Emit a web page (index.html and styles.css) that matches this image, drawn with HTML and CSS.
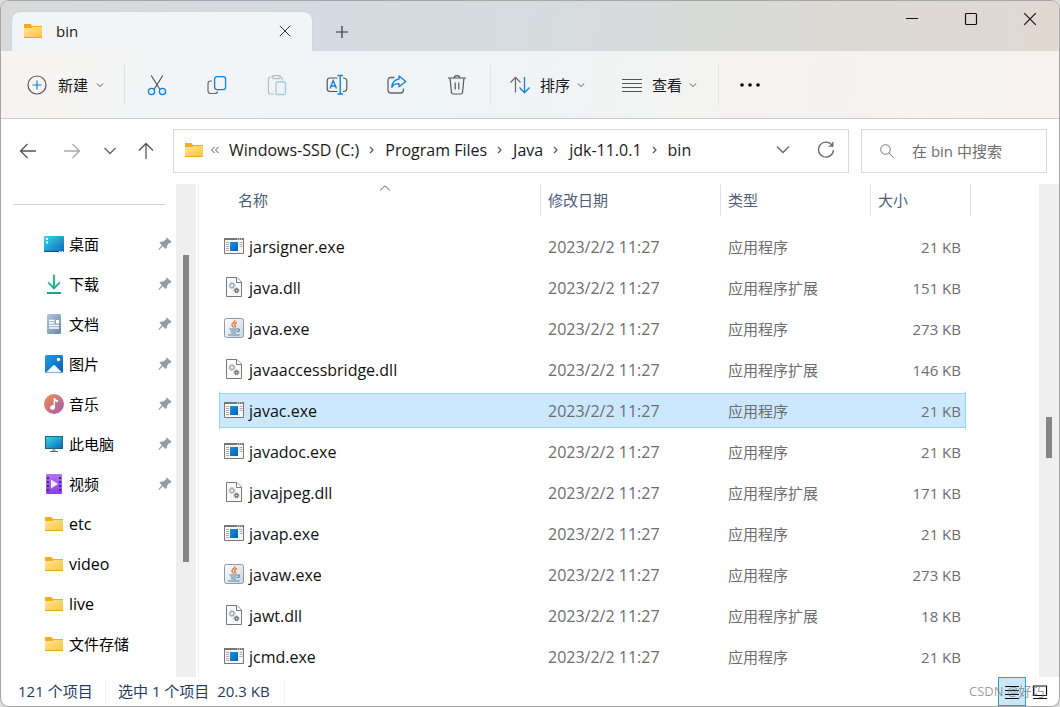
FILE: index.html
```html
<!DOCTYPE html>
<html lang="zh-CN">
<head>
<meta charset="utf-8">
<title>bin</title>
<link rel="stylesheet" href="styles.css">
</head>
<body>
<svg class="defs" aria-hidden="true">
  <defs>
    <linearGradient id="g-folder" x1="0" y1="0" x2="1" y2="1"><stop offset="0" stop-color="#ffe69a"/><stop offset="1" stop-color="#fcc436"/></linearGradient>
    <linearGradient id="g-desk" x1="0" y1="0" x2="1" y2="1"><stop offset="0" stop-color="#35d8e4"/><stop offset="1" stop-color="#0f68bd"/></linearGradient>
    <linearGradient id="g-down" x1="0" y1="0" x2="0" y2="1"><stop offset="0" stop-color="#2dc887"/><stop offset="1" stop-color="#12a595"/></linearGradient>
    <linearGradient id="g-doc" x1="0" y1="0" x2="1" y2="1"><stop offset="0" stop-color="#b4c6da"/><stop offset="1" stop-color="#6886a6"/></linearGradient>
    <linearGradient id="g-pic" x1="0" y1="0" x2="1" y2="1"><stop offset="0" stop-color="#1f9ce8"/><stop offset="1" stop-color="#075fb5"/></linearGradient>
    <linearGradient id="g-mus" x1="0" y1="0" x2="1" y2="1"><stop offset="0" stop-color="#f28e4b"/><stop offset="1" stop-color="#a35bb4"/></linearGradient>
    <linearGradient id="g-vid" x1="0" y1="0" x2="0" y2="1"><stop offset="0" stop-color="#b574f2"/><stop offset="1" stop-color="#8540dd"/></linearGradient>
    <linearGradient id="g-java" x1="0" y1="0" x2="1" y2="1"><stop offset="0" stop-color="#ffffff"/><stop offset="1" stop-color="#c9d3dc"/></linearGradient>
    <linearGradient id="g-exe" x1="0" y1="0" x2="1" y2="1"><stop offset="0" stop-color="#1492e6"/><stop offset="1" stop-color="#0860ae"/></linearGradient>
    <symbol id="folder" viewBox="0 0 20 20"><path d="M1 3.500q0-.5.5-.5h6l1.500 2h9.500q.5 0 .5.500V10H1z" fill="#f3ad1b"/><path d="M1 7h7.500L9.500 6H19v11H1z" fill="url(#g-folder)"/><path d="M1 16.500h18" stroke="#eaa621"/></symbol>
    <symbol id="pin" viewBox="0 0 14 14"><path d="M8.600.4 13.500 4.600 12.300 6.200 11.300 6 9.200 8.200 9 10.600 7.600 12 4.800 9.300 1.200 13 .5 12.900.600 12 4 8.300 1.500 5.700 2.900 4.600 5.400 4.600 7.900 2.400z" fill="#939ba3"/></symbol>
    <symbol id="exe" viewBox="0 0 20 20"><path d="M.5 2.500h19v15H.5z" fill="#f8f8f8" stroke="#777"/><path d="M0 2h20v2H0z" fill="#777"/><path d="M13 3h1m1 0h1m1 0h1" stroke="#fff"/><path d="M6 6h8v9H6z" fill="url(#g-exe)"/><path d="M2 6.500h3M2 8.500h3M2 10.500h3M2 12.500h3M2 14.500h3M15.500 6.500h3M15.500 8.500h3M15.500 10.500h3" stroke="#aaa"/></symbol>
    <symbol id="dll" viewBox="0 0 20 20"><path d="M2.500.5h10.500l4.500 4.500v14.500h-15z" fill="#fafafa" stroke="#777"/><path d="M12.500.5V5.500h5" fill="#fff" stroke="#777"/><circle cx="8" cy="8.500" r="2" fill="none" stroke="#a3acb5" stroke-width="1.300"/><circle cx="8" cy="8.500" r="3" fill="none" stroke="#a3acb5" stroke-dasharray="1.200 1.200"/><circle cx="12.500" cy="13.500" r="1.500" fill="none" stroke="#606b76" stroke-width="1.300"/><circle cx="12.500" cy="13.500" r="2.400" fill="none" stroke="#606b76" stroke-dasharray="1 1"/></symbol>
    <symbol id="java" viewBox="0 0 20 20"><rect x=".5" y=".5" width="19" height="19" rx="2" fill="url(#g-java)" stroke="#8b9aa8"/><path d="M11 2c1 2-4 3-3 5.200.3.800 1.400 1.200 1.200 2.300M13 4.500c-3 1-2.800 2-1.800 3 .6.700.2 1.500-.8 2" fill="none" stroke="#e8743b" stroke-width="1.400"/><path d="M5.500 11h8M6.500 13h6M7.200 15h4.800M4 17h11.500M13.500 11c3-.6 2.600 2.600-.5 2.700" fill="none" stroke="#5f86a2" stroke-width="1.200"/></symbol>
    <symbol id="chev" viewBox="0 0 8 8"><path d="M.8 2.500 4 5.500l3.200-3" fill="none" stroke="#666"/></symbol>
    <symbol id="crumb" viewBox="0 0 6 10"><path d="M1 2l3 3-3 3" fill="none" stroke="#555" stroke-width="1.200"/></symbol>
  </defs>
</svg>
<div class="window">
  <header class="titlebar">
    <div class="tab">
      <svg class="ic20"><use href="#folder"/></svg>
      <span class="tab-name">bin</span>
      <button class="tab-close" aria-label="关闭标签页"><svg width="12" height="12" viewBox="0 0 12 12"><path d="M.8.8l10.400 10.400M11.200.8.8 11.200" stroke="#333" fill="none"/></svg></button>
    </div>
    <button class="new-tab" aria-label="新标签页"><svg width="14" height="14" viewBox="0 0 14 14"><path d="M7 1v12M1 7h12" stroke="#333" stroke-width="1.200"/></svg></button>
    <div class="caption">
      <button aria-label="最小化"><svg width="14" height="14" viewBox="0 0 14 14"><path d="M1 6.500h12" stroke="#111"/></svg></button>
      <button aria-label="最大化"><svg width="14" height="14" viewBox="0 0 14 14"><rect x="1.500" y="1.500" width="11" height="11" rx="1" fill="none" stroke="#111" stroke-width="1.200"/></svg></button>
      <button aria-label="关闭"><svg width="14" height="14" viewBox="0 0 14 14"><path d="M1.200 1.200l11.600 11.600M12.800 1.200 1.200 12.800" stroke="#111" stroke-width="1.200"/></svg></button>
    </div>
  </header>

  <div class="toolbar">
    <button class="cmd cmd-new"><svg class="ic20" viewBox="0 0 20 20"><circle cx="10" cy="10" r="9" fill="none" stroke="#555" stroke-width="1.200"/><path d="M10 5.500v9M5.500 10h9" stroke="#1480d8" stroke-width="1.200"/></svg>新建<svg class="ic8"><use href="#chev"/></svg></button>
    <span class="sep"></span>
    <div class="tools">
      <button aria-label="剪切"><svg class="ic22" viewBox="0 0 22 22"><path d="M5.200 1.500 14 15.500M16.800 1.500 8 15.500" fill="none" stroke="#555" stroke-width="1.200"/><circle cx="5.500" cy="17.500" r="3.100" fill="none" stroke="#1480d8" stroke-width="1.300"/><circle cx="16.500" cy="17.500" r="3.100" fill="none" stroke="#1480d8" stroke-width="1.300"/></svg></button>
      <button aria-label="复制"><svg class="ic22" viewBox="0 0 22 22"><path d="M6 7H4.500Q2 7 2 9.500V17q0 2.500 2.500 2.500H9q2.500 0 2.500-2" fill="none" stroke="#666" stroke-width="1.200"/><rect x="8.600" y="2.600" width="11" height="13" rx="2.500" fill="none" stroke="#1480d8" stroke-width="1.300"/></svg></button>
      <button aria-label="粘贴" disabled><svg class="ic22" viewBox="0 0 22 22"><path d="M7 3H4.500Q2.500 3 2.500 5v13q0 2 2 2H8M14 3h.5q2 0 2 2v1.500M7 1.600h7v3H7z" fill="none" stroke="#bbb" stroke-width="1.200"/><rect x="10" y="8" width="9.500" height="12.500" rx="1.500" fill="none" stroke="#9ccbee" stroke-width="1.300"/></svg></button>
      <button aria-label="重命名"><svg class="ic22" viewBox="0 0 22 22"><path d="M11.500 4H4Q1.200 4 1.200 7v7.500Q1.200 17.500 4 17.500h7.500M17 4q3.800 0 3.800 3v7.500q0 3-3.800 3" fill="none" stroke="#555" stroke-width="1.200"/><path d="M11.500 1.500h5.500M11.500 20h5.500M14.200 1.500V20M4 14.500 7.200 6.500l3.300 8M5.100 12h4.300" fill="none" stroke="#1480d8" stroke-width="1.400"/></svg></button>
      <button aria-label="共享"><svg class="ic22" viewBox="0 0 22 22"><path d="M8.500 3.500H5Q2 3.500 2 6.500v9.500q0 3 3 3h9.500q3 0 3-3v-1.500" fill="none" stroke="#666" stroke-width="1.300"/><path d="M13 2l6.800 5.500L13 12.800V9.700Q8 9.500 5.800 13.300 6.500 5.800 13 5z" fill="none" stroke="#1480d8" stroke-width="1.300" stroke-linejoin="round"/></svg></button>
      <button aria-label="删除"><svg class="ic22" viewBox="0 0 22 22"><path d="M2 4h18M4 4l1.500 14.500q.2 1.500 1.700 1.500h7.600q1.500 0 1.700-1.500L18 4M8.200 4Q8.200 1.600 11 1.600T13.800 4M9.200 8.500v7M12.800 8.500v7" fill="none" stroke="#555" stroke-width="1.200"/></svg></button>
    </div>
    <span class="sep"></span>
    <button class="cmd cmd-sort"><svg class="ic20" viewBox="0 0 20 20"><path d="M5.500 17.500V2.500M.5 7.500l5-5.200 5 5.200" fill="none" stroke="#666" stroke-width="1.200"/><path d="M14.500 2v15.500M9.500 12.500l5 5.200 5-5.200" fill="none" stroke="#1480d8" stroke-width="1.300"/></svg>排序<svg class="ic8"><use href="#chev"/></svg></button>
    <button class="cmd cmd-view"><svg class="ic20" viewBox="0 0 20 20"><path d="M0 4.500h20M0 8.500h20M0 12.500h20M0 16.500h20" stroke="#555"/></svg>查看<svg class="ic8"><use href="#chev"/></svg></button>
    <span class="sep"></span>
    <button class="more" aria-label="查看更多"><svg class="ic20" viewBox="0 0 20 20"><circle cx="2" cy="10" r="1.800"/><circle cx="10" cy="10" r="1.800"/><circle cx="18" cy="10" r="1.800"/></svg></button>
  </div>

  <div class="navbar">
    <div class="nav-buttons">
      <button aria-label="后退"><svg width="18" height="18" viewBox="0 0 18 18"><path d="M17 9H1.500M8.500 2l-7 7 7 7" fill="none" stroke="#555" stroke-width="1.300"/></svg></button>
      <button aria-label="前进"><svg width="18" height="18" viewBox="0 0 18 18"><path d="M1 9h15.500M9.500 2l7 7-7 7" fill="none" stroke="#aaa" stroke-width="1.300"/></svg></button>
      <button class="recent" aria-label="最近位置"><svg width="12" height="12" viewBox="0 0 12 12"><path d="M.5 3 6 8.500 11.500 3" fill="none" stroke="#666" stroke-width="1.400"/></svg></button>
      <button class="up" aria-label="上移"><svg width="18" height="18" viewBox="0 0 18 18"><path d="M9 17V1.500M2 8.500l7-7 7 7" fill="none" stroke="#555" stroke-width="1.300"/></svg></button>
    </div>
    <div class="address">
      <svg class="ic20"><use href="#folder"/></svg>
      <svg class="overflow" width="10" height="8" viewBox="0 0 10 8"><path d="M4.500 1 1.500 4l3 3M8.500 1l-3 3 3 3" fill="none" stroke="#555"/></svg>
      <nav class="crumbs" aria-label="路径">
        <a href="#">Windows-SSD (C:)</a><svg class="ic-crumb"><use href="#crumb"/></svg>
        <a href="#">Program Files</a><svg class="ic-crumb"><use href="#crumb"/></svg>
        <a href="#">Java</a><svg class="ic-crumb"><use href="#crumb"/></svg>
        <a href="#">jdk-11.0.1</a><svg class="ic-crumb"><use href="#crumb"/></svg>
        <a href="#">bin</a>
      </nav>
      <button aria-label="历史记录"><svg width="14" height="14" viewBox="0 0 14 14"><path d="M1 3.500 7 9.500l6-6" fill="none" stroke="#666" stroke-width="1.400"/></svg></button>
      <button aria-label="刷新"><svg width="18" height="18" viewBox="0 0 18 18"><path d="M15.500 4.800A7.500 7.500 0 1 0 16.500 9M15.800 1v4.200h-4.200" fill="none" stroke="#666" stroke-width="1.300"/></svg></button>
    </div>
    <label class="search">
      <svg width="14" height="14" viewBox="0 0 14 14"><circle cx="5.500" cy="5.500" r="4.800" fill="none" stroke="#777"/><path d="M9 9l4.600 4.600" stroke="#777"/></svg>
      <input type="text" placeholder="在 bin 中搜索" aria-label="搜索">
    </label>
  </div>

  <main class="content">
    <aside class="sidebar">
      <hr>
      <ul class="places">
        <li><svg class="ic20" viewBox="0 0 20 20"><rect y="2" width="20" height="16" rx="1" fill="url(#g-desk)"/><path d="M0 17h20v0q0 1-1 1H1q-1 0-1-1z" fill="#0c4f80"/><path d="M2 4h2v2H2zM2 7.500h2v2H2z" fill="#fff"/><path d="M15 17.500h4" stroke="#dff" stroke-dasharray="1 .5"/></svg><a href="#">桌面</a><svg class="pin"><use href="#pin"/></svg></li>
        <li><svg class="ic20" viewBox="0 0 20 20"><path d="M9 .5h2v11.500l4.200-4.300 1.300 1.300L10 15.800 3.500 9l1.300-1.300L9 12zM3 18h14v2H3z" fill="url(#g-down)"/></svg><a href="#">下载</a><svg class="pin"><use href="#pin"/></svg></li>
        <li><svg class="ic20" viewBox="0 0 20 20"><rect x="3" width="14" height="20" rx="1.500" fill="url(#g-doc)"/><path d="M5 6.500h5.500M5 9h5.500M5 11.500h10M5 14h10" stroke="#fff" stroke-width="1.300"/><path d="M12 6h3v3.500h-3z" fill="#fff"/></svg><a href="#">文档</a><svg class="pin"><use href="#pin"/></svg></li>
        <li><svg class="ic20" viewBox="0 0 20 20"><rect x="1" y="1" width="18" height="18" rx="1.500" fill="url(#g-pic)"/><path d="M2 18.500 9 11.500q1-1 2 0l7 7z" fill="#f0f7ff"/><circle cx="14.500" cy="5.500" r="1.700" fill="#fff"/></svg><a href="#">图片</a><svg class="pin"><use href="#pin"/></svg></li>
        <li><svg class="ic20" viewBox="0 0 20 20"><circle cx="10" cy="10" r="10" fill="url(#g-mus)"/><path d="M9.600 4h1.400q.5 2 3 2.200V8q-2 0-3-.8V13.500a2.400 2.200 0 1 1-1.400-2z" fill="#fff"/></svg><a href="#">音乐</a><svg class="pin"><use href="#pin"/></svg></li>
        <li><svg class="ic20" viewBox="0 0 20 20"><rect x="1" y="2" width="18" height="13" fill="#1a6584"/><rect x="2" y="3" width="16" height="11" fill="url(#g-desk)"/><path d="M8.500 15h3v2h-3z" fill="#9aa4ad"/><path d="M6 17.500h8" stroke="#566"/></svg><a href="#">此电脑</a><svg class="pin"><use href="#pin"/></svg></li>
        <li><svg class="ic20" viewBox="0 0 20 20"><rect x="2" width="16" height="20" rx="1" fill="url(#g-vid)"/><path d="M4 3v15M16 3v15" stroke="#4c2394" stroke-width="2" stroke-dasharray="2 2"/><path d="M7 5.500 14 10 7 14.500z" fill="#f4eafe"/></svg><a href="#">视频</a><svg class="pin"><use href="#pin"/></svg></li>
        <li><svg class="ic20"><use href="#folder"/></svg><a class="latin" href="#">etc</a></li>
        <li><svg class="ic20"><use href="#folder"/></svg><a class="latin" href="#">video</a></li>
        <li><svg class="ic20"><use href="#folder"/></svg><a class="latin" href="#">live</a></li>
        <li><svg class="ic20"><use href="#folder"/></svg><a href="#">文件存储</a></li>
      </ul>
    </aside>
    <div class="track track-side"><div class="thumb"></div></div>
    <section class="files">
      <table>
        <colgroup><col class="c-name"><col class="c-date"><col class="c-type"><col class="c-size"><col class="c-end"></colgroup>
        <thead><tr><th class="th-name">名称<svg class="sort" viewBox="0 0 12 6"><path d="M1 5.500 6 .8l5 4.700" fill="none" stroke="#666"/></svg></th><th>修改日期</th><th>类型</th><th colspan="2" class="th-last">大小</th></tr></thead>
        <tbody>
          <tr><td><span class="file"><svg class="ic20"><use href="#exe"/></svg>jarsigner.exe</span></td><td class="latin">2023/2/2 11:27</td><td>应用程序</td><td>21 KB</td></tr>
          <tr><td><span class="file"><svg class="ic20"><use href="#dll"/></svg>java.dll</span></td><td class="latin">2023/2/2 11:27</td><td>应用程序扩展</td><td>151 KB</td></tr>
          <tr><td><span class="file"><svg class="ic20"><use href="#java"/></svg>java.exe</span></td><td class="latin">2023/2/2 11:27</td><td>应用程序</td><td>273 KB</td></tr>
          <tr><td><span class="file"><svg class="ic20"><use href="#dll"/></svg>javaaccessbridge.dll</span></td><td class="latin">2023/2/2 11:27</td><td>应用程序扩展</td><td>146 KB</td></tr>
          <tr class="selected"><td><span class="file"><svg class="ic20"><use href="#exe"/></svg>javac.exe</span></td><td class="latin">2023/2/2 11:27</td><td>应用程序</td><td>21 KB</td></tr>
          <tr><td><span class="file"><svg class="ic20"><use href="#exe"/></svg>javadoc.exe</span></td><td class="latin">2023/2/2 11:27</td><td>应用程序</td><td>21 KB</td></tr>
          <tr><td><span class="file"><svg class="ic20"><use href="#dll"/></svg>javajpeg.dll</span></td><td class="latin">2023/2/2 11:27</td><td>应用程序扩展</td><td>171 KB</td></tr>
          <tr><td><span class="file"><svg class="ic20"><use href="#exe"/></svg>javap.exe</span></td><td class="latin">2023/2/2 11:27</td><td>应用程序</td><td>21 KB</td></tr>
          <tr><td><span class="file"><svg class="ic20"><use href="#java"/></svg>javaw.exe</span></td><td class="latin">2023/2/2 11:27</td><td>应用程序</td><td>273 KB</td></tr>
          <tr><td><span class="file"><svg class="ic20"><use href="#dll"/></svg>jawt.dll</span></td><td class="latin">2023/2/2 11:27</td><td>应用程序扩展</td><td>18 KB</td></tr>
          <tr><td><span class="file"><svg class="ic20"><use href="#exe"/></svg>jcmd.exe</span></td><td class="latin">2023/2/2 11:27</td><td>应用程序</td><td>21 KB</td></tr>
        </tbody>
      </table>
    </section>
    <div class="track track-main"><div class="thumb"></div></div>
  </main>

  <footer class="status">
    <span class="count">121 个项目</span>
    <span class="chosen">选中 1 个项目&nbsp; 20.3 KB</span>
    <div class="views">
      <button class="view-on" aria-label="详细信息"><svg width="16" height="16" viewBox="0 0 16 16"><path d="M1 2.500h14M1 6.500h14M1 10.500h14M1 14.500h14" stroke="#111" stroke-width="1.200"/></svg></button>
      <button aria-label="大图标"><svg width="16" height="16" viewBox="0 0 16 16"><path d="M1.500 2h13v9.500h-13zM1 14.500h14" fill="none" stroke="#111" stroke-width="1.200"/></svg></button>
      <span class="mark">CSDN @好巧.</span>
    </div>
  </footer>
</div>
</body>
</html>
```
FILE: styles.css
```css
* { box-sizing: border-box; }
html, body { height: 100%; }
body {
  margin: 0;
  background: #dcdcdc;
  color: #1a1a1a;
  font: 15px/20px "Open Sans", "Noto Sans CJK SC", sans-serif;
}
.defs { position: absolute; width: 0; height: 0; }
svg { display: block; flex: none; }
button {
  display: flex;
  align-items: center;
  justify-content: center;
  margin: 0;
  padding: 0;
  border: 0;
  background: none;
  color: inherit;
  font: inherit;
}
a { color: inherit; text-decoration: none; white-space: nowrap; }
.latin, .crumbs, .file { font-size: 16px; }
.ic20 { width: 20px; height: 20px; }
.ic22 { width: 22px; height: 22px; }
.ic8 { width: 8px; height: 8px; }
.ic-crumb { width: 6px; height: 10px; }

.window {
  display: flex;
  flex-direction: column;
  height: 100%;
  overflow: hidden;
  border: 1px solid #a6a6a6;
  border-radius: 9px;
  background: #fff;
}

.titlebar {
  display: flex;
  align-items: flex-end;
  height: 50px;
  flex: none;
  padding-left: 11px;
  background: linear-gradient(100deg, #d9d9d9, #d4dae2 28%, #d5dce0 45%, #dbdad5 78%, #e2d8d2);
}
.tab {
  display: flex;
  align-items: center;
  width: 300px;
  height: 39px;
  padding: 0 21px 2px 11px;
  border-radius: 8px 8px 0 0;
  background: #f3f4f5;
  box-shadow: 0 0 1px #aab;
}
.tab-name { flex: 1; padding-left: 13px; font-weight: 500; }
.new-tab { width: 60px; height: 39px; }
.caption { display: flex; align-self: flex-start; margin-left: auto; }
.caption button { width: 59px; height: 36px; }

.toolbar {
  display: flex;
  align-items: center;
  height: 68px;
  flex: none;
  padding-left: 26px;
  border-bottom: 1px solid #cbcccb;
  background: linear-gradient(100deg, #f6f4f2, #f2f4f6 20%, #eff4f6 42%, #f3f3f2 66%, #f7f2ef);
}
.cmd { gap: 10px; }
.cmd-new { gap: 11px; margin-right: 20px; }
.cmd .ic8 { margin-left: -3px; }
.sep { width: 1px; height: 40px; background: #e0e2e3; }
.tools { display: flex; padding: 0 3px 0 2px; }
.tools button { width: 60px; height: 44px; }
.cmd-sort { margin: 0 37px 0 19px; }
.cmd-view { margin-right: 21px; }
.more { margin-left: 21px; }

.navbar {
  display: flex;
  height: 65px;
  flex: none;
  padding: 10px 12px 11px 5px;
}
.nav-buttons { display: flex; margin-right: 7px; }
.nav-buttons button { width: 44px; }
.nav-buttons .recent { width: 32px; }
.nav-buttons .up { width: 40px; }
.address {
  display: flex;
  align-items: center;
  flex: 1;
  margin-right: 12px;
  padding: 0 1px 2px 10px;
  border: 1px solid #d9d9d9;
}
.address button { width: 43px; height: 40px; }
.overflow { margin: 0 9px 0 6px; }
.crumbs { display: flex; align-items: center; flex: 1; gap: 10px; }
.search {
  display: flex;
  align-items: center;
  width: 186px;
  padding-left: 18px;
  border: 1px solid #d9d9d9;
}
.search input {
  flex: 1;
  min-width: 0;
  padding: 0 0 0 18px;
  border: 0;
  outline: 0;
  background: none;
  font: inherit;
}
.search input::placeholder { color: #6d6d6d; opacity: 1; }

.content { display: flex; flex: 1; min-height: 0; }
.sidebar { width: 175px; flex: none; overflow: hidden; }
.sidebar hr { height: 1px; margin: 20px 11px 19px 13px; border: 0; background: #d2d2d2; }
.places { margin: 0; padding: 0 4px 0 43px; list-style: none; color: #000; }
.places li { display: flex; align-items: center; gap: 5px; height: 40px; }
.pin { width: 14px; height: 14px; margin-left: auto; }
.track { width: 20px; flex: none; background: #efefef; }
.thumb { width: 6px; margin-left: 7px; background: #858585; }
.track-side .thumb { height: 307px; margin-top: 71px; }
.track-main .thumb { height: 41px; margin-top: 233px; }

.files {
  flex: 1;
  min-width: 0;
  margin-left: 2px;
  padding-left: 20px;
  border-left: 1px solid #f0f0f0;
  overflow: hidden;
}
table { width: 752px; table-layout: fixed; border-spacing: 0; }
.c-name { width: 321px; }
.c-date { width: 180px; }
.c-type { width: 150px; }
.c-size { width: 96px; }
.c-end { width: 5px; }
th {
  height: 42px;
  padding: 0 8px 10px;
  background: linear-gradient(#e2e2e2, #e2e2e2) left top / 1px 32px no-repeat;
  color: #4c607a;
  font-weight: 400;
  text-align: left;
}
.th-name { position: relative; padding-left: 19px; background: none; }
.sort { position: absolute; top: 1px; left: 160px; width: 12px; height: 6px; }
.th-last {
  background:
    linear-gradient(#e2e2e2, #e2e2e2) left top / 1px 32px no-repeat,
    linear-gradient(#e2e2e2, #e2e2e2) right top / 1px 32px no-repeat;
}
td {
  height: 41px;
  padding: 0 8px;
  border: 0 solid transparent;
  border-width: 3px 0;
  background-clip: padding-box;
  color: #6d6d6d;
}
td:first-child { padding-left: 5px; color: #111; }
td:nth-child(4) { padding-right: 5px; text-align: right; }
.file { display: flex; align-items: center; gap: 5px; }
.file svg { margin-bottom: 2px; }
.selected td {
  background-color: #cce8ff;
  background-image: linear-gradient(#99d1ff, #99d1ff), linear-gradient(#99d1ff, #99d1ff);
  background-position: top, bottom;
  background-repeat: no-repeat;
  background-size: 100% 1px;
}
.selected td:first-child { border-left: 1px solid #99d1ff; padding-left: 4px; }
.selected td:nth-child(4) { border-right: 1px solid #99d1ff; padding-right: 4px; }

.status {
  display: flex;
  align-items: center;
  height: 29px;
  flex: none;
  padding: 0 5px 0 17px;
  color: #1f3a5f;
}
.count, .chosen { padding-bottom: 2px; border-right: 1px solid #f0f0f0; white-space: nowrap; }
.count { width: 88px; }
.chosen { width: 179px; padding-left: 12px; }
.views { position: relative; display: flex; margin-left: auto; }
.views button { width: 28px; height: 29px; }
.views .view-on { border: 1px solid #2f9bd8; background: #cce8f7; }
.mark { position: absolute; right: 6px; top: 4px; color: #777b; font-size: 13px; white-space: nowrap; }
```
